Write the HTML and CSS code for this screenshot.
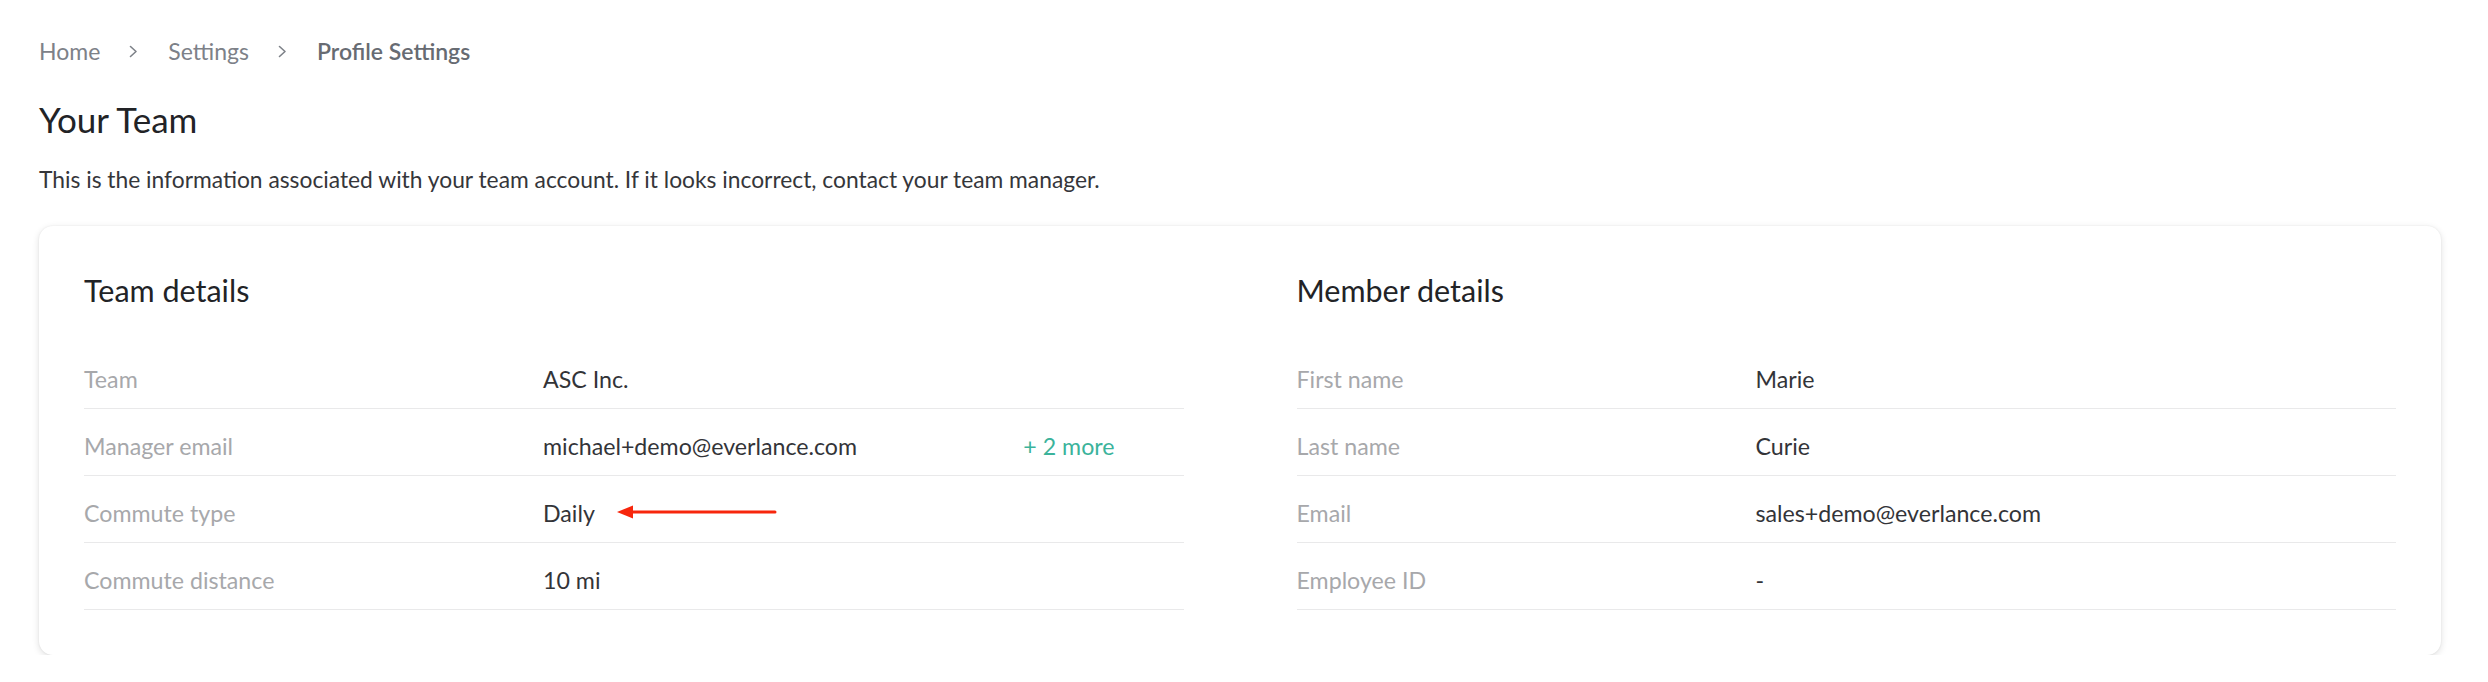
FILE: index.html
```html
<!DOCTYPE html>
<html lang="en">
  <head>
    <meta charset="UTF-8" />
    <meta name="viewport" content="width=device-width, initial-scale=1.0" />
    <title>Profile Settings</title>
    <link rel="stylesheet" href="styles.css">
  </head>
  <body>
    <div id="wrap">
      <nav class="breadcrumb">
        <a href="#">Home</a>
        <span class="sep">
          <svg width="9" height="13" viewBox="0 0 9 13"><polyline points="1.5,1.5 7,6.5 1.5,11.5" /></svg>
        </span>
        <a href="#">Settings</a>
        <span class="sep">
          <svg width="9" height="13" viewBox="0 0 9 13"><polyline points="1.5,1.5 7,6.5 1.5,11.5" /></svg>
        </span>
        <span class="current">Profile Settings</span>
      </nav>

      <h1 class="page_title">Your Team</h1>
      <p class="intro">
        This is the information associated with your team account. If it looks incorrect, contact your team manager.
      </p>

      <div class="card">
        <div class="panel">
          <h2 class="panel_title">Team details</h2>
          <ul class="details">
            <li>
              <span class="label">Team</span>
              <span class="value">ASC Inc.</span>
            </li>
            <li>
              <span class="label">Manager email</span>
              <span class="value">michael+demo@everlance.com</span>
              <a href="#" class="more">+ 2 more</a>
            </li>
            <li>
              <span class="label">Commute type</span>
              <span class="value">
                Daily
                <!-- annotation arrow -->
                <svg class="arrow" width="160" height="16" viewBox="0 0 160 16">
                  <path d="M12 8H158" stroke="#f7260c" stroke-width="3" stroke-linecap="round" />
                  <path d="M0 8L16 1.5V14.5Z" fill="#f7260c" />
                </svg>
              </span>
            </li>
            <li>
              <span class="label">Commute distance</span>
              <span class="value">10 mi</span>
            </li>
          </ul>
        </div>

        <div class="panel">
          <h2 class="panel_title">Member details</h2>
          <ul class="details">
            <li>
              <span class="label">First name</span>
              <span class="value">Marie</span>
            </li>
            <li>
              <span class="label">Last name</span>
              <span class="value">Curie</span>
            </li>
            <li>
              <span class="label">Email</span>
              <span class="value">sales+demo@everlance.com</span>
            </li>
            <li>
              <span class="label">Employee ID</span>
              <span class="value">-</span>
            </li>
          </ul>
        </div>
      </div>
    </div>
  </body>
</html>
```

FILE: styles.css
```css
* {
  margin: 0;
  padding: 0;
  box-sizing: border-box;
}

body {
  font-family: "Lato", "Noto Sans", sans-serif;
  color: #2f3033;
  background: #fff;
}

ul,
li {
  list-style: none;
}

a {
  text-decoration: none;
}

#wrap {
  padding: 37px 47px 0 39px;
}

/* breadcrumb */
.breadcrumb {
  display: flex;
  align-items: center;
  font-size: 23px;
  line-height: 28px;
  color: #7d8188;
}

.breadcrumb a {
  color: #7d8188;
}

.breadcrumb .sep {
  display: flex;
  margin: 0 30px 0 29px;
}

.breadcrumb .sep polyline {
  fill: none;
  stroke: #7d8188;
  stroke-width: 1.6;
  stroke-linecap: round;
  stroke-linejoin: round;
}

.breadcrumb .current {
  font-weight: 600;
  color: #676b72;
}

.page_title {
  margin-top: 33px;
  font-size: 35px;
  line-height: 42px;
  font-weight: 400;
  color: #222326;
}

.intro {
  margin-top: 25px;
  font-size: 22.8px;
  line-height: 28px;
  color: #35363a;
}

/* card */
.card {
  margin-top: 33px;
  display: grid;
  grid-template-columns: 1fr 1fr;
  column-gap: 113px;
  padding: 46px 45px 45px;
  background: #fff;
  border-radius: 14px;
  box-shadow: 0 2px 7px rgba(0, 0, 0, 0.13), 0 0 2px rgba(0, 0, 0, 0.07);
}

.panel_title {
  font-size: 30.5px;
  line-height: 36px;
  font-weight: 400;
  color: #222326;
  margin-bottom: 34px;
}

.details li {
  display: grid;
  grid-template-columns: 459px 1fr auto;
  align-items: center;
  padding: 24px 0 16px;
  line-height: 26px;
  font-size: 23.2px;
  border-bottom: 1px solid #e9e9ea;
}

.details .label {
  color: #a7a8ab;
}

.details .value {
  display: flex;
  align-items: center;
  color: #333438;
}

.details .arrow {
  margin-left: 22px;
  margin-top: -2px;
}

.details .more {
  color: #3bb39b;
  margin-right: 69px;
}
```
